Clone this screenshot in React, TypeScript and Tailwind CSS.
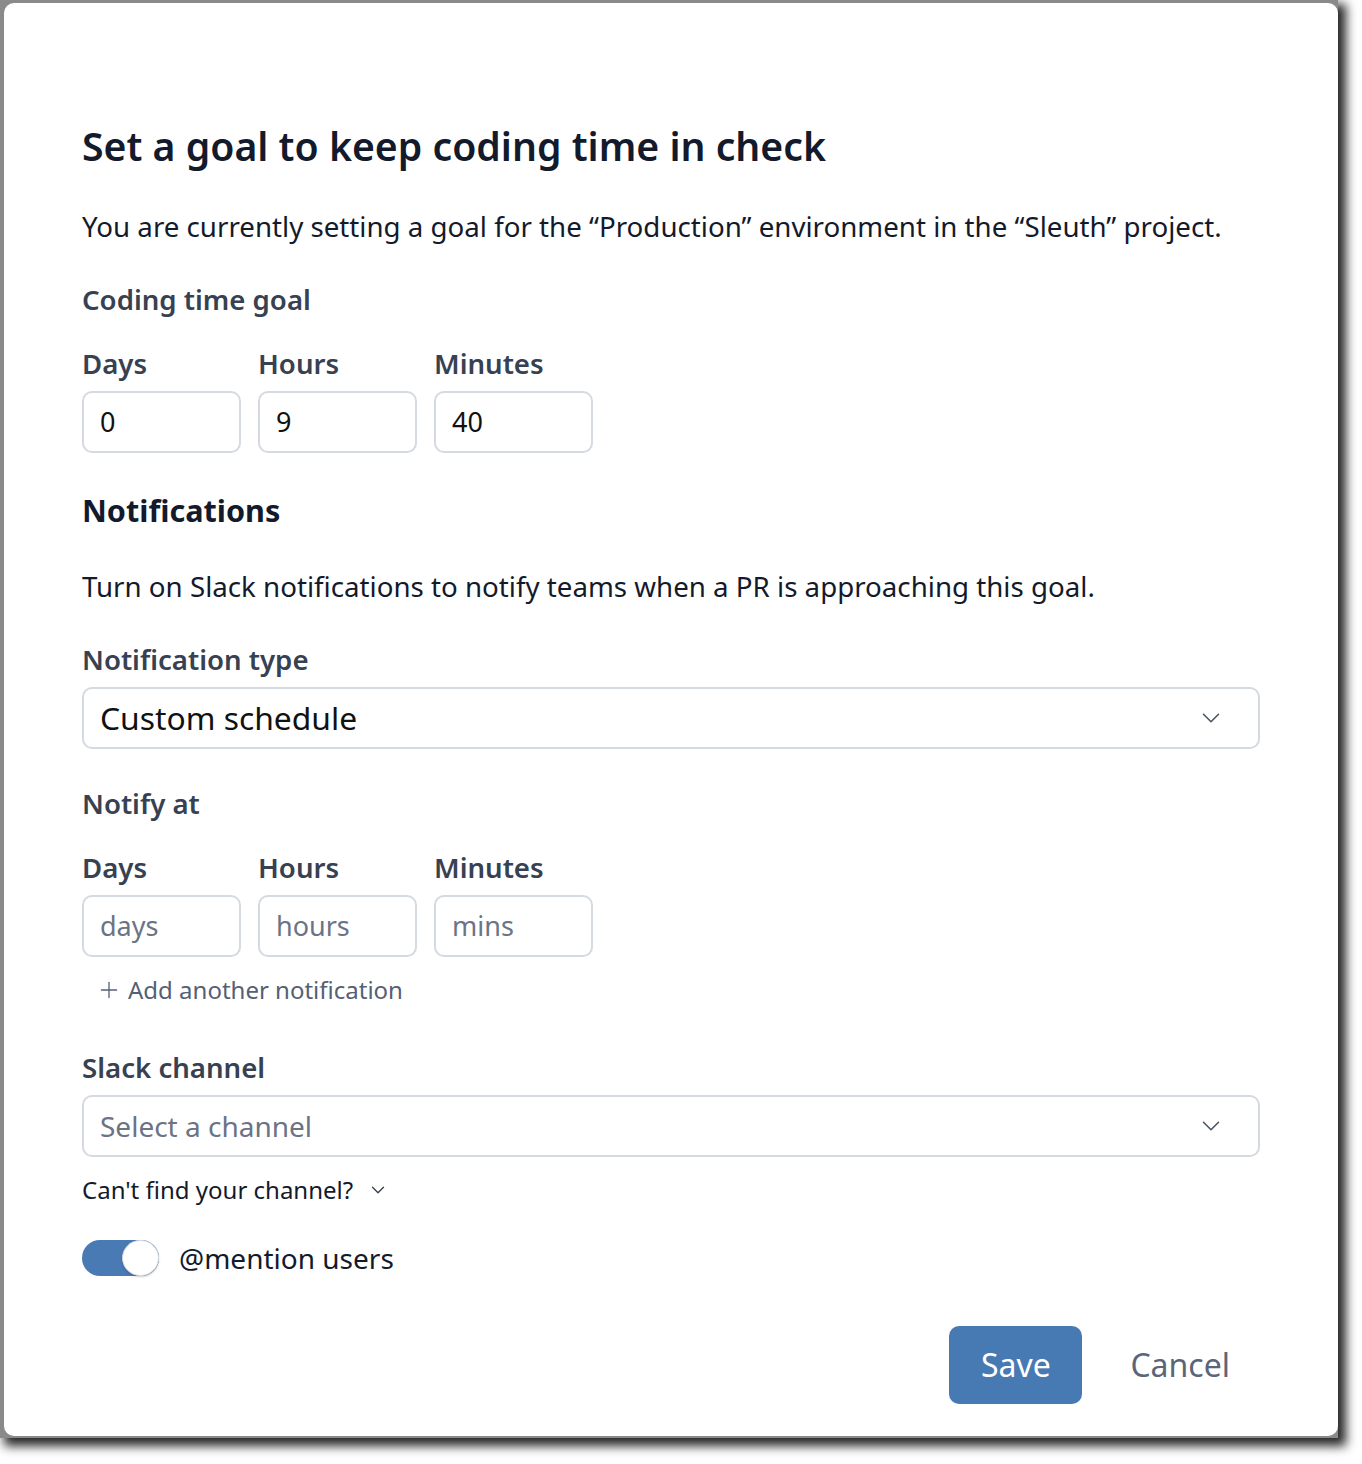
import { ChevronDown, Plus } from "lucide-react";

const font = { fontFamily: '"Noto Sans", "Open Sans", sans-serif' };

function FieldLabel({ children, className = "" }: { children: React.ReactNode; className?: string }) {
  return (
    <div className={`flex h-[36px] items-center text-[27.6px] font-semibold leading-[36px] text-[#374151] ${className}`}>
      {children}
    </div>
  );
}

function TimeInput({ value, placeholder }: { value?: string; placeholder: string }) {
  return (
    <div className="flex h-[62px] w-[159px] items-center rounded-[10px] border-2 border-[#d5d9e0] px-[16px] text-[27px]">
      {value ? (
        <span className="text-[#111111]">{value}</span>
      ) : (
        <span className="text-[#6b7385]">{placeholder}</span>
      )}
    </div>
  );
}

function TimeRow({ values }: { values?: string[] }) {
  const cols = [
    { label: "Days", ph: "days" },
    { label: "Hours", ph: "hours" },
    { label: "Minutes", ph: "mins" },
  ];
  return (
    <div className="flex gap-[17px]">
      {cols.map((c, i) => (
        <div key={c.label} className="flex flex-col">
          <FieldLabel>{c.label}</FieldLabel>
          <div className="mt-[10px]">
            <TimeInput value={values?.[i]} placeholder={c.ph} />
          </div>
        </div>
      ))}
    </div>
  );
}

function Select({ text, muted }: { text: string; muted?: boolean }) {
  return (
    <div className="flex h-[62px] items-center justify-between rounded-[10px] border-2 border-[#d5d9e0] pl-[16px] pr-[32px]">
      <span className={muted ? "text-[28px] text-[#6b7385]" : "text-[31.8px] text-[#111111]"}>{text}</span>
      <ChevronDown className="h-[30px] w-[30px] text-[#4b5563]" strokeWidth={1.3} />
    </div>
  );
}

export default function App() {
  return (
    <div className="h-[1464px] w-[1362px] bg-white" style={font}>
      <div className="h-[1438px] w-[1338px] bg-[#8a8a8a] pb-[2px] pl-[4px] pt-[3px] shadow-[6px_6px_10px_2px_rgba(0,0,0,0.85)]">
        <div className="flex h-full flex-col rounded-[10px] bg-white px-[78px] pt-[123px]">
          <h1 className="flex h-[40px] items-center text-[39.2px] font-semibold text-[#131a2b]">
            Set a goal to keep coding time in check
          </h1>
          <p className="mt-[43px] flex h-[36px] items-center text-[27.7px] text-[#131a2b]">
            You are currently setting a goal for the “Production” environment in the “Sleuth” project.
          </p>
          <FieldLabel className="mt-[36px]">Coding time goal</FieldLabel>
          <div className="mt-[28px]">
            <TimeRow values={["0", "9", "40"]} />
          </div>

          <h2 className="mt-[38px] flex h-[40px] items-center text-[30.6px] font-bold text-[#131a2b]">Notifications</h2>
          <p className="mt-[38px] flex h-[36px] items-center text-[27.7px] text-[#131a2b]">
            Turn on Slack notifications to notify teams when a PR is approaching this goal.
          </p>
          <FieldLabel className="mt-[36px]">Notification type</FieldLabel>
          <div className="mt-[10px]">
            <Select text="Custom schedule" />
          </div>

          <FieldLabel className="mt-[36px]">Notify at</FieldLabel>
          <div className="mt-[28px]">
            <TimeRow />
          </div>
          <div className="mt-[17px] flex h-[32px] items-center gap-[6px] pl-[14px] text-[24px] leading-[32px] text-[#556074]">
            <Plus className="h-[26px] w-[26px]" strokeWidth={1.2} />
            <span>Add another notification</span>
          </div>

          <FieldLabel className="mt-[43px]">Slack channel</FieldLabel>
          <div className="mt-[10px]">
            <Select text="Select a channel" muted />
          </div>
          <div className="mt-[17px] flex h-[32px] items-center gap-[14px] text-[24px] leading-[32px] text-[#131a2b]">
            <span>Can't find your channel?</span>
            <ChevronDown className="h-[22px] w-[22px] text-[#374151]" strokeWidth={1.5} />
          </div>

          <div className="mt-[34px] flex h-[36px] items-center gap-[20px]">
            <div className="relative h-[36px] w-[77px] rounded-full bg-[#4a7ab4]">
              <div className="absolute right-0 top-0 h-[36px] w-[37px] rounded-full border border-[#d5d9e0] bg-white shadow-[0_1px_2px_rgba(0,0,0,0.2)]" />
            </div>
            <span className="text-[28px] leading-[36px] text-[#131a2b]">@mention users</span>
          </div>

          <div className="mt-[50px] flex h-[78px] items-center justify-end gap-[48px] pr-[30px]">
            <button className="flex h-[78px] w-[133px] items-center justify-center rounded-[10px] bg-[#4779b3] text-[32px] text-white">
              Save
            </button>
            <span className="text-[32px] text-[#5b6579]">Cancel</span>
          </div>
        </div>
      </div>
    </div>
  );
}
